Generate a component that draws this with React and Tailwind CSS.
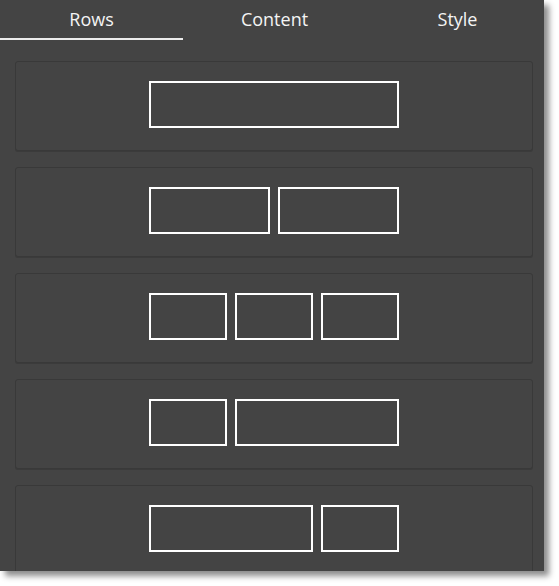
export default function App() {
  const rows = [
    [250],
    [121, 121],
    [78, 78, 78],
    [78, 164],
    [164, 78],
  ];
  const tabs = ["Rows", "Content", "Style"];
  return (
    <div className="w-[559px] h-[586px] bg-white" style={{ fontFamily: '"Open Sans", "Liberation Sans", sans-serif' }}>
      <div className="w-[544px] h-[571px] bg-[#444444] overflow-hidden shadow-[5px_5px_6px_rgba(0,0,0,0.45)]">
        <div className="w-[549px] flex h-[40px]">
          {tabs.map((t, i) => (
            <div
              key={t}
              className={
                "w-[183px] flex items-center justify-center text-[18px] text-[#f4f4f4] " +
                (i === 0 ? "border-b-2 border-[#ececec]" : "border-b-2 border-transparent")
              }
            >
              <span>{t}</span>
            </div>
          ))}
        </div>
        <div className="w-[548px] flex flex-col gap-[16px] px-[15px] pt-[21px]">
          {rows.map((r, i) => (
            <div
              key={i}
              className="h-[90px] shrink-0 rounded-[3px] border border-[#393939] shadow-[0_1px_0_#3b3b3b] bg-[#444444] flex justify-center pt-[19px]"
            >
              <div className="flex gap-[8px]">
                {r.map((w, j) => (
                  <div
                    key={j}
                    className="h-[47px] border-2 border-white"
                    style={{ width: w }}
                  />
                ))}
              </div>
            </div>
          ))}
        </div>
      </div>
    </div>
  );
}
